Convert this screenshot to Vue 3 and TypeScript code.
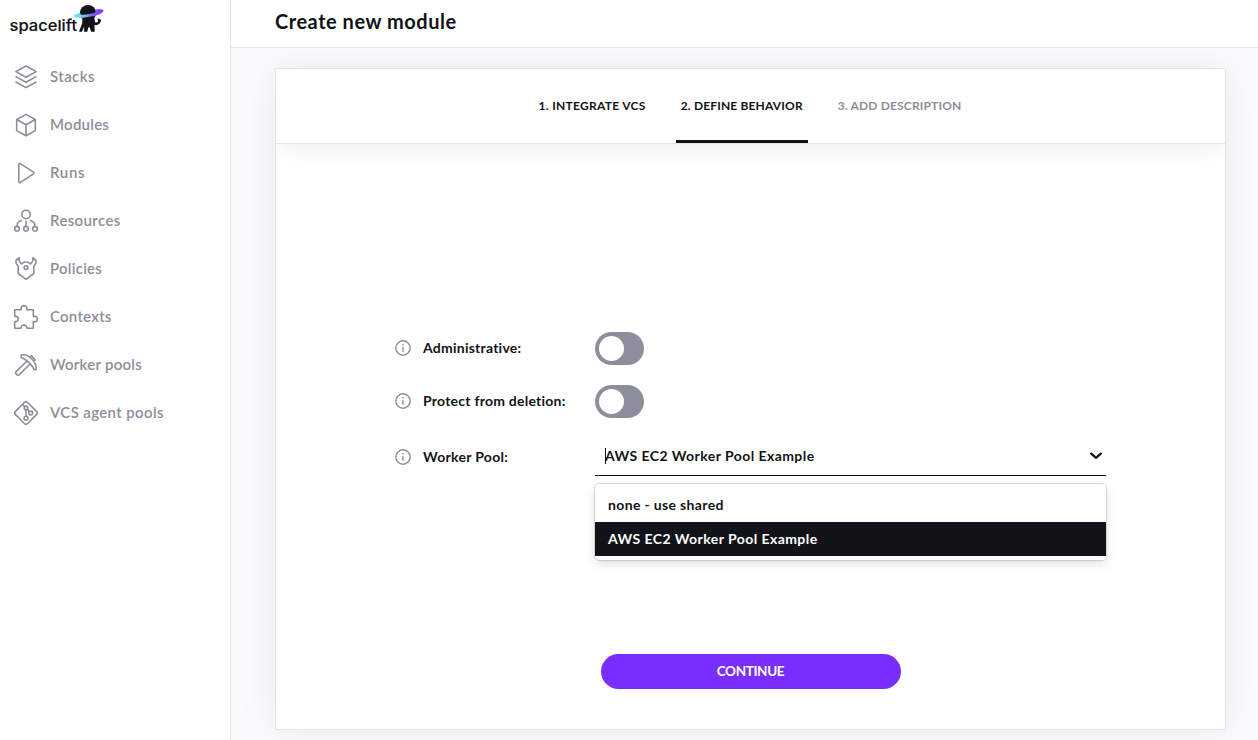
<script setup lang="ts">
import { ref } from 'vue'

interface NavItem {
  id: string
  label: string
}
interface Toggle {
  id: string
  label: string
  on: boolean
}

const nav: NavItem[] = [
  { id: 'stacks', label: 'Stacks' },
  { id: 'modules', label: 'Modules' },
  { id: 'runs', label: 'Runs' },
  { id: 'resources', label: 'Resources' },
  { id: 'policies', label: 'Policies' },
  { id: 'contexts', label: 'Contexts' },
  { id: 'workers', label: 'Worker pools' },
  { id: 'vcs', label: 'VCS agent pools' },
]
const steps = ['1. INTEGRATE VCS', '2. DEFINE BEHAVIOR', '3. ADD DESCRIPTION']
const current = 1
const toggles = ref<Toggle[]>([
  { id: 'admin', label: 'Administrative:', on: false },
  { id: 'protect', label: 'Protect from deletion:', on: false },
])
const options = ['none - use shared', 'AWS EC2 Worker Pool Example']
const selected = ref(options[1])
</script>

<template>
  <div class="app">
    <aside class="sidebar">
      <svg class="logo" width="110" height="40" viewBox="0 0 110 40">
        <defs>
          <linearGradient id="ring" x1="0" x2="1" y1="0" y2="0">
            <stop offset="0" stop-color="#6ff3ea" />
            <stop offset=".35" stop-color="#6fc3f5" />
            <stop offset=".65" stop-color="#7a5bff" />
            <stop offset="1" stop-color="#7d3cff" />
          </linearGradient>
        </defs>
        <text class="wordmark" x="9.5" y="31" textLength="67.5" lengthAdjust="spacingAndGlyphs">spacelift</text>
        <path
          d="M82.500 17h11.500l1.200 5.200c1.500.5 2.700-.1 2.900-1.400l-.6-1.300.9-1 2.600 1.200c-.1 3.300-2.400 5.700-5.900 5.400l-.6-.1.200 6.700h-3.500l-1.600-4.500-1.300.2-1 4.300h-3.300l.2-5.500-2.200 5.500H79l3.200-8.500z"
          fill="#121318"
        />
        <circle cx="88" cy="13" r="8.100" fill="#121318" />
        <path
          d="M80.300 12.800c-4 .8-6.600 1.900-6.400 3.300.4 2.500 8.200 2.300 17 .5s12.900-4.300 12.500-6.200c-.2-1.200-3.400-1.500-7.900-.9l.4 2.100c-.4 1.100-2.600 1.800-6.200 2.500-3.800.7-7.500 1-9.100.5z"
          fill="url(#ring)"
        />
      </svg>
      <nav>
        <a v-for="item in nav" :key="item.id" class="nav-item" :class="item.id">
          <svg class="icon" width="24" height="24" viewBox="0 0 24 24">
            <path
              v-if="item.id === 'stacks'"
              d="M12 1 22.200 6.600 12 12.200 1.800 6.600zM1.500 11.400 12 17.200 22.500 11.400M1.500 16.700 12 22.600 22.500 16.700"
            />
            <path
              v-else-if="item.id === 'modules'"
              d="M12 1.400 21.300 6.500V17.600L12 22.800 2.700 17.600V6.500zM2.700 6.500 12 11.700 21.300 6.500M12 11.700V22.800"
            />
            <path
              v-else-if="item.id === 'runs'"
              d="M4.800 3.400v17.200c0 .9.8 1.300 1.500.8l13.200-8.600c.6-.4.6-1.200 0-1.600L6.300 2.600c-.7-.5-1.500-.1-1.500.8z"
            />
            <g v-else-if="item.id === 'resources'">
              <circle cx="12" cy="5.400" r="4.200" />
              <circle cx="3" cy="19.700" r="2.300" />
              <circle cx="12" cy="19.700" r="2.300" />
              <circle cx="21" cy="19.700" r="2.300" />
              <path d="M12 11.800v5.200M7.900 11.300 4.800 12.900Q3 14 3 17M16.100 11.300l3.100 1.600Q21 14 21 17" />
            </g>
            <g v-else-if="item.id === 'policies'">
              <path
                d="M5 .7C2.900 2 1.700 3.400 1.900 5c.1 1.600 1.300 2.600 2.300 4.500v7L12 22.300l7.800-5.800v-7c1-1.900 2.200-2.900 2.300-4.500.2-1.600-1-3-3.100-4.300.3 2.300-.2 4.300-2.400 6.300C15.200 5.600 13.800 5 12 5s-3.200.6-4.600 2C5.200 5 4.700 3 5 .7z"
              />
              <circle cx="12" cy="10.600" r="1.900" />
            </g>
            <path
              v-else-if="item.id === 'contexts'"
              d="M.7 4.700H7.200C7.700 4.300 7.200 3.600 7.200 3.200c0-3.400 5.600-3.400 5.600 0 0 .5-.5 1.100 0 1.500h6.500v6.600c.5.400 1 .1 1.500 0 3.300-.2 3.300 5.300 0 5.400-.5 0-1-.4-1.500 0v6.600h-6.100c-.6-.5-.3-.9-.5-1.500-.6-2.200-4.800-2.200-5.400 0-.2.600.1 1-.5 1.500H.7v-6.600c.5-.4 1 .1 1.600-.1 2.800-.7 2.800-4.500 0-5.200-.6-.2-1.100.3-1.600-.1z"
            />
            <g v-else-if="item.id === 'workers'">
              <path
                d="M13.200 7.700 1.900 18.900c-.6.600-.5 1.200 0 1.700l1.300 1.400c.6.600 1.200.6 1.800 0L16.300 10.800"
              />
              <path
                d="M7.300 2c3.400-.9 7.400.7 10.400 3.800 3.200 3.200 5 7.400 4.200 10.900l-1.500.3c-1.300-2.700-2.800-4.900-5-7.100s-4.800-4-8.300-5.600zM15.800 4.300l1.600-1.400 3.800 3.900-1.400 1.700"
              />
            </g>
            <g v-else>
              <path
                d="M10.600 1.300 1.300 10.600q-1.400 1.400 0 2.800l9.300 9.300q1.400 1.400 2.800 0l9.300-9.300q1.400-1.400 0-2.800L13.400 1.300q-1.400-1.400-2.800 0z"
              />
              <circle cx="12" cy="6.900" r="1.800" />
              <circle cx="16.700" cy="12" r="1.900" />
              <circle cx="12" cy="17.200" r="1.900" />
              <path d="M8.300 3.400l2.500 2.300M12 8.700v6.600M13.300 8.200l2.200 2.400" />
            </g>
          </svg>
          <span class="nav-label">{{ item.label }}</span>
        </a>
      </nav>
    </aside>

    <main class="main">
      <header class="topbar"><h1>Create new module</h1></header>
      <div class="content">
        <section class="card">
          <ol class="steps">
            <li
              v-for="(step, i) in steps"
              :key="step"
              class="step"
              :class="{ active: i === current, pending: i > current, first: i === 0 }"
            >
              {{ step }}
            </li>
          </ol>
          <form class="form" @submit.prevent>
            <div v-for="t in toggles" :key="t.id" class="row">
              <svg class="info" width="16" height="16" viewBox="0 0 16 16">
                <circle cx="8" cy="8" r="7.200" />
                <path d="M8 7.200v4.500M8 4.100v1.400" />
              </svg>
              <span class="label">{{ t.label }}</span>
              <button type="button" class="toggle" :class="{ on: t.on }" @click="t.on = !t.on">
                <span class="knob"></span>
              </button>
            </div>
            <div class="row select-row">
              <svg class="info" width="16" height="16" viewBox="0 0 16 16">
                <circle cx="8" cy="8" r="7.200" />
                <path d="M8 7.200v4.500M8 4.100v1.400" />
              </svg>
              <span class="label">Worker Pool:</span>
              <div class="select">
                <span class="caret"></span>
                <span class="value">{{ selected }}</span>
                <svg class="chevron" width="14" height="10" viewBox="0 0 14 10">
                  <path d="M2.200 2.600 7 6.900 11.800 2.600" />
                </svg>
                <ul class="menu">
                  <li
                    v-for="o in options"
                    :key="o"
                    :class="{ chosen: o === selected }"
                    @click="selected = o"
                  >
                    {{ o }}
                  </li>
                </ul>
              </div>
            </div>
            <button class="continue">CONTINUE</button>
          </form>
        </section>
      </div>
    </main>
  </div>
</template>

<style>
body {
  overflow: hidden;
}
</style>

<style scoped>
.app {
  display: flex;
  height: 740px;
  color: #121318;
  background: #fff;
  font-family: Lato, "Open Sans", sans-serif;
}
.sidebar {
  box-sizing: border-box;
  width: 231px;
  flex: none;
  border-right: 1px solid #e5e5e8;
}
.logo {
  display: block;
  margin-bottom: 13px;
}
.wordmark {
  font: 500 15px Inter, sans-serif;
  fill: #121318;
  stroke: #121318;
  stroke-width: 0.15px;
}
.nav-item {
  display: flex;
  align-items: center;
  gap: 12px;
  height: 48px;
  padding-left: 14px;
  color: #8d8e9b;
  font-size: 15px;
  font-weight: 600;
  letter-spacing: 0.25px;
}
.nav-label {
  padding-bottom: 2px;
}
.nav-item.stacks {
  letter-spacing: 0.42px;
}
.nav-item.runs {
  letter-spacing: 0.65px;
}
.nav-item.vcs,
.nav-item.resources {
  letter-spacing: 0.36px;
}
.icon {
  fill: none;
  stroke: #8d8e9b;
  stroke-width: 1.6;
  stroke-linejoin: round;
  overflow: visible;
}
.main {
  display: flex;
  flex: 1;
  flex-direction: column;
}
.topbar {
  height: 47px;
  flex: none;
  padding-left: 44px;
  border-bottom: 1px solid #e5e5e8;
}
h1 {
  margin: 0;
  font-size: 20px;
  font-weight: 700;
  line-height: 42px;
  letter-spacing: 0.52px;
}
.content {
  flex: 1;
  padding: 20px 32px 0 44px;
  background: #f9fbfd;
  overflow: hidden;
}
.card {
  box-sizing: border-box;
  height: 662px;
  border: 1px solid #e5e5e8;
  border-radius: 2px;
  background: #fff;
  box-shadow: 0 0 40px rgba(18, 19, 24, 0.08);
  overflow: hidden;
}
.steps {
  display: flex;
  justify-content: center;
  gap: 25px;
  height: 74px;
  margin: 0;
  padding: 0 1px 0 0;
  border-bottom: 1px solid #e5e5e8;
  box-shadow: 0 0 30px rgba(18, 19, 24, 0.09);
  list-style: none;
}
.step {
  box-sizing: border-box;
  padding: 0 5px;
  border-bottom: 3px solid transparent;
  font-size: 12px;
  font-weight: 700;
  line-height: 74px;
  letter-spacing: 0.16px;
}
.step.first {
  letter-spacing: 0.29px;
}
.step.active {
  border-color: #121318;
}
.step.pending {
  color: #8d8e9b;
}
.form {
  display: flex;
  flex-direction: column;
  padding: 188px 119px 0;
}
.row {
  display: flex;
  align-items: center;
  height: 33px;
  margin-bottom: 20px;
}
.info {
  margin: 0 12px 1px 0;
  fill: none;
  stroke: #8d8e9b;
  stroke-width: 1.400;
}
.label {
  width: 172px;
  padding-bottom: 1px;
  font-size: 14px;
  font-weight: 700;
  line-height: 20px;
  letter-spacing: 0.24px;
}
.toggle {
  display: flex;
  width: 49px;
  height: 33px;
  padding: 4px;
  border: 0;
  border-radius: 17px;
  background: #8d8e9b;
}
.toggle.on {
  justify-content: flex-end;
  background: #792eff;
}
.knob {
  width: 25px;
  height: 25px;
  border-radius: 50%;
  background: #fff;
}
.select-row {
  height: 38px;
  margin: 0;
}
.select-row .info {
  margin-bottom: 0;
}
.select-row .label {
  padding-bottom: 0;
  letter-spacing: 0.3px;
}
.select {
  position: relative;
  box-sizing: border-box;
  display: flex;
  align-items: center;
  width: 511px;
  height: 38px;
  padding: 0 3px 2px 10px;
  border-bottom: 1px solid #121318;
  font-size: 14px;
  font-weight: 700;
  letter-spacing: 0.44px;
}
.caret {
  width: 1px;
  height: 16px;
  margin-right: -1px;
  background: #121318;
}
.value {
  flex: 1;
}
.chevron {
  fill: none;
  stroke: #121318;
  stroke-width: 2.300;
  stroke-linecap: round;
  stroke-linejoin: round;
}
.menu {
  position: absolute;
  top: 46px;
  left: 0;
  width: 511px;
  margin: 0;
  padding: 4px 0;
  border-radius: 4px;
  background: #fff;
  box-shadow: 0 0 0 1px rgba(0, 0, 0, 0.12), 0 4px 11px rgba(0, 0, 0, 0.12);
  list-style: none;
}
.menu li {
  height: 34px;
  padding-left: 13px;
  line-height: 34px;
}
.menu li:first-child {
  letter-spacing: 0.35px;
}
.menu .chosen {
  background: #121318;
  color: #fff;
}
.continue {
  align-self: center;
  width: 300px;
  height: 35px;
  margin-top: 178px;
  padding: 0 0 1px;
  border: 0;
  border-radius: 18px;
  background: #792eff;
  color: #fff;
  font: 700 13.5px Lato, sans-serif;
  letter-spacing: -0.35px;
}
</style>
